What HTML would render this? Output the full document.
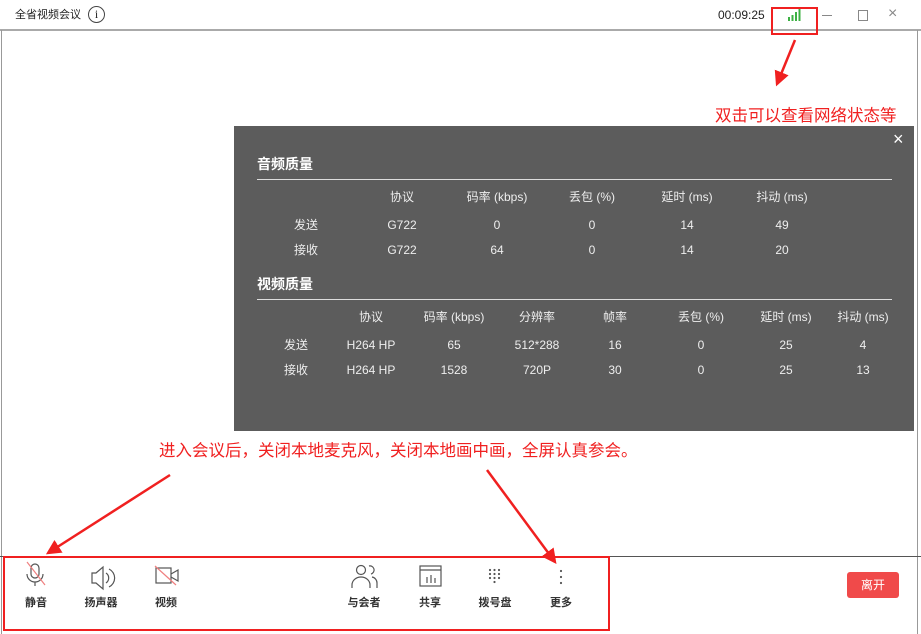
<!DOCTYPE html><html><head><meta charset="utf-8"><style>
*{margin:0;padding:0;box-sizing:border-box}
body{width:921px;height:634px;background:#fff;position:relative;overflow:hidden;font-family:"Liberation Sans","Noto Sans CJK SC",sans-serif;color:#222}
.a{position:absolute;white-space:nowrap}
.c{position:absolute;white-space:nowrap;transform:translateX(-50%);font-size:12px;color:#eee;line-height:14px;height:14px}
.red{color:#f02020;font-size:16.5px;line-height:20px}
.lbl{position:absolute;transform:translateX(-50%);font-size:11px;font-weight:bold;color:#333;white-space:nowrap;line-height:14px}
</style></head><body>
<div class="a" style="left:15px;top:8px;font-size:11px;line-height:14px">全省视频会议</div>
<div class="a" style="left:88px;top:6px;width:17px;height:17px;border:1px solid #444;border-radius:50%;font-size:12px;text-align:center;line-height:15px;font-family:'Liberation Serif',serif">i</div>
<div class="a" style="left:718px;top:8px;font-size:12px">00:09:25</div>
<svg class="a" style="left:788px;top:9px" width="14" height="12"><rect x="0" y="8" width="2" height="4" fill="#3cb043"/><rect x="3.5" y="6" width="2" height="6" fill="#3cb043"/><rect x="7" y="3" width="2" height="9" fill="#3cb043"/><rect x="10.5" y="0" width="2" height="12" fill="#3cb043"/></svg>
<div class="a" style="left:822px;top:15px;width:10px;height:1px;background:#888"></div>
<div class="a" style="left:858px;top:10px;width:10px;height:11px;border:1px solid #888"></div>
<div class="a" style="left:888px;top:5px;font-size:16px;color:#888">×</div>
<div class="a" style="left:0;top:29px;width:921px;height:2px;background:#aaa"></div>
<div class="a" style="left:1px;top:30px;width:1px;height:604px;background:#999"></div>
<div class="a" style="left:917px;top:30px;width:1px;height:604px;background:#999"></div>
<div class="a" style="left:0;top:556px;width:921px;height:1px;background:#555"></div>
<div class="a" style="left:771px;top:7px;width:47px;height:28px;border:2px solid #f02020"></div>

<div class="a" style="left:234px;top:126px;width:680px;height:305px;background:#5c5c5c"></div>
<div class="a" style="left:893px;top:129px;font-size:18px;color:#fff">×</div>
<div class="a" style="left:257px;top:155px;font-size:14px;font-weight:bold;color:#fff;line-height:18px">音频质量</div>
<div class="a" style="left:257px;top:179px;width:635px;height:1px;background:#ddd"></div>
<div class="c" style="left:402px;top:190px">协议</div><div class="c" style="left:497px;top:190px">码率 (kbps)</div><div class="c" style="left:592px;top:190px">丢包 (%)</div><div class="c" style="left:687px;top:190px">延时 (ms)</div><div class="c" style="left:782px;top:190px">抖动 (ms)</div>
<div class="c" style="left:306px;top:218px">发送</div><div class="c" style="left:402px;top:218px">G722</div><div class="c" style="left:497px;top:218px">0</div><div class="c" style="left:592px;top:218px">0</div><div class="c" style="left:687px;top:218px">14</div><div class="c" style="left:782px;top:218px">49</div>
<div class="c" style="left:306px;top:243px">接收</div><div class="c" style="left:402px;top:243px">G722</div><div class="c" style="left:497px;top:243px">64</div><div class="c" style="left:592px;top:243px">0</div><div class="c" style="left:687px;top:243px">14</div><div class="c" style="left:782px;top:243px">20</div>
<div class="a" style="left:257px;top:275px;font-size:14px;font-weight:bold;color:#fff;line-height:18px">视频质量</div>
<div class="a" style="left:257px;top:299px;width:635px;height:1px;background:#ddd"></div>
<div class="c" style="left:371px;top:310px">协议</div><div class="c" style="left:454px;top:310px">码率 (kbps)</div><div class="c" style="left:537px;top:310px">分辨率</div><div class="c" style="left:615px;top:310px">帧率</div><div class="c" style="left:701px;top:310px">丢包 (%)</div><div class="c" style="left:786px;top:310px">延时 (ms)</div><div class="c" style="left:863px;top:310px">抖动 (ms)</div>
<div class="c" style="left:296px;top:338px">发送</div><div class="c" style="left:371px;top:338px">H264 HP</div><div class="c" style="left:454px;top:338px">65</div><div class="c" style="left:537px;top:338px">512*288</div><div class="c" style="left:615px;top:338px">16</div><div class="c" style="left:701px;top:338px">0</div><div class="c" style="left:786px;top:338px">25</div><div class="c" style="left:863px;top:338px">4</div>
<div class="c" style="left:296px;top:363px">接收</div><div class="c" style="left:371px;top:363px">H264 HP</div><div class="c" style="left:454px;top:363px">1528</div><div class="c" style="left:537px;top:363px">720P</div><div class="c" style="left:615px;top:363px">30</div><div class="c" style="left:701px;top:363px">0</div><div class="c" style="left:786px;top:363px">25</div><div class="c" style="left:863px;top:363px">13</div>

<div class="a red" style="left:715px;top:106px">双击可以查看网络状态等</div>
<div class="a red" style="left:159px;top:441px">进入会议后，关闭本地麦克风，关闭本地画中画，全屏认真参会。</div>

<svg class="a" style="left:0;top:0" width="921" height="634">
<defs><marker id="m" markerWidth="6" markerHeight="6" refX="5" refY="3" orient="auto"><path d="M0,0 L6,3 L0,6z" fill="#f02020"/></marker></defs>
<line x1="795" y1="40" x2="777" y2="84" stroke="#f02020" stroke-width="2.5" marker-end="url(#m)"/>
<line x1="170" y1="475" x2="48" y2="553" stroke="#f02020" stroke-width="2.5" marker-end="url(#m)"/>
<line x1="487" y1="470" x2="555" y2="562" stroke="#f02020" stroke-width="2.5" marker-end="url(#m)"/>
<g fill="none" stroke="#555" stroke-width="1.2">
<rect x="31" y="564" width="8" height="14" rx="4"/><path d="M27,574 a8,8 0 0 0 16,0 M35,582 v4"/>
<path d="M92,573 h4 l7,-6 v22 l-7,-6 h-4z M106,573 a6,6 0 0 1 0,10 M109,569 a10,10 0 0 1 0,18"/>
<rect x="156" y="568" width="15" height="15"/><path d="M171,574 l7,-4 v11 l-7,-4"/>
<circle cx="361" cy="570" r="4.5"/><path d="M352,588 v-3 a9,8 0 0 1 18,0 v3 M369,566 a4,4 0 0 1 2,8 M372,577 a6,6 0 0 1 5,6 v5"/>
<rect x="420" y="566" width="21" height="20"/><path d="M420,570 h21 M427,577 v6 M431,575 v8 M435,578 v5"/>
</g>
<path d="M27,562 L45,585" stroke="#f08080" stroke-width="1.2"/>
<path d="M155,566 L176,585" stroke="#f08080" stroke-width="1.2"/>
<g fill="#555"><circle cx="490" cy="570" r="1.1"/><circle cx="494.5" cy="570" r="1.1"/><circle cx="499" cy="570" r="1.1"/><circle cx="490" cy="574" r="1.1"/><circle cx="494.5" cy="574" r="1.1"/><circle cx="499" cy="574" r="1.1"/><circle cx="490" cy="578" r="1.1"/><circle cx="494.5" cy="578" r="1.1"/><circle cx="499" cy="578" r="1.1"/><circle cx="494.5" cy="582" r="1.1"/>
<circle cx="561" cy="571" r="1.1"/><circle cx="561" cy="577" r="1.1"/><circle cx="561" cy="583" r="1.1"/></g>
</svg>
<div class="lbl" style="left:36px;top:596px">静音</div>
<div class="lbl" style="left:101px;top:596px">扬声器</div>
<div class="lbl" style="left:166px;top:596px">视频</div>
<div class="lbl" style="left:364px;top:596px">与会者</div>
<div class="lbl" style="left:430px;top:596px">共享</div>
<div class="lbl" style="left:495px;top:596px">拨号盘</div>
<div class="lbl" style="left:561px;top:596px">更多</div>
<div class="a" style="left:3px;top:556px;width:607px;height:75px;border:2px solid #f02020"></div>
<div class="a" style="left:847px;top:572px;width:52px;height:26px;background:#f04a4a;border-radius:3px;color:#fff;font-size:12px;text-align:center;line-height:26px">离开</div>
</body></html>
